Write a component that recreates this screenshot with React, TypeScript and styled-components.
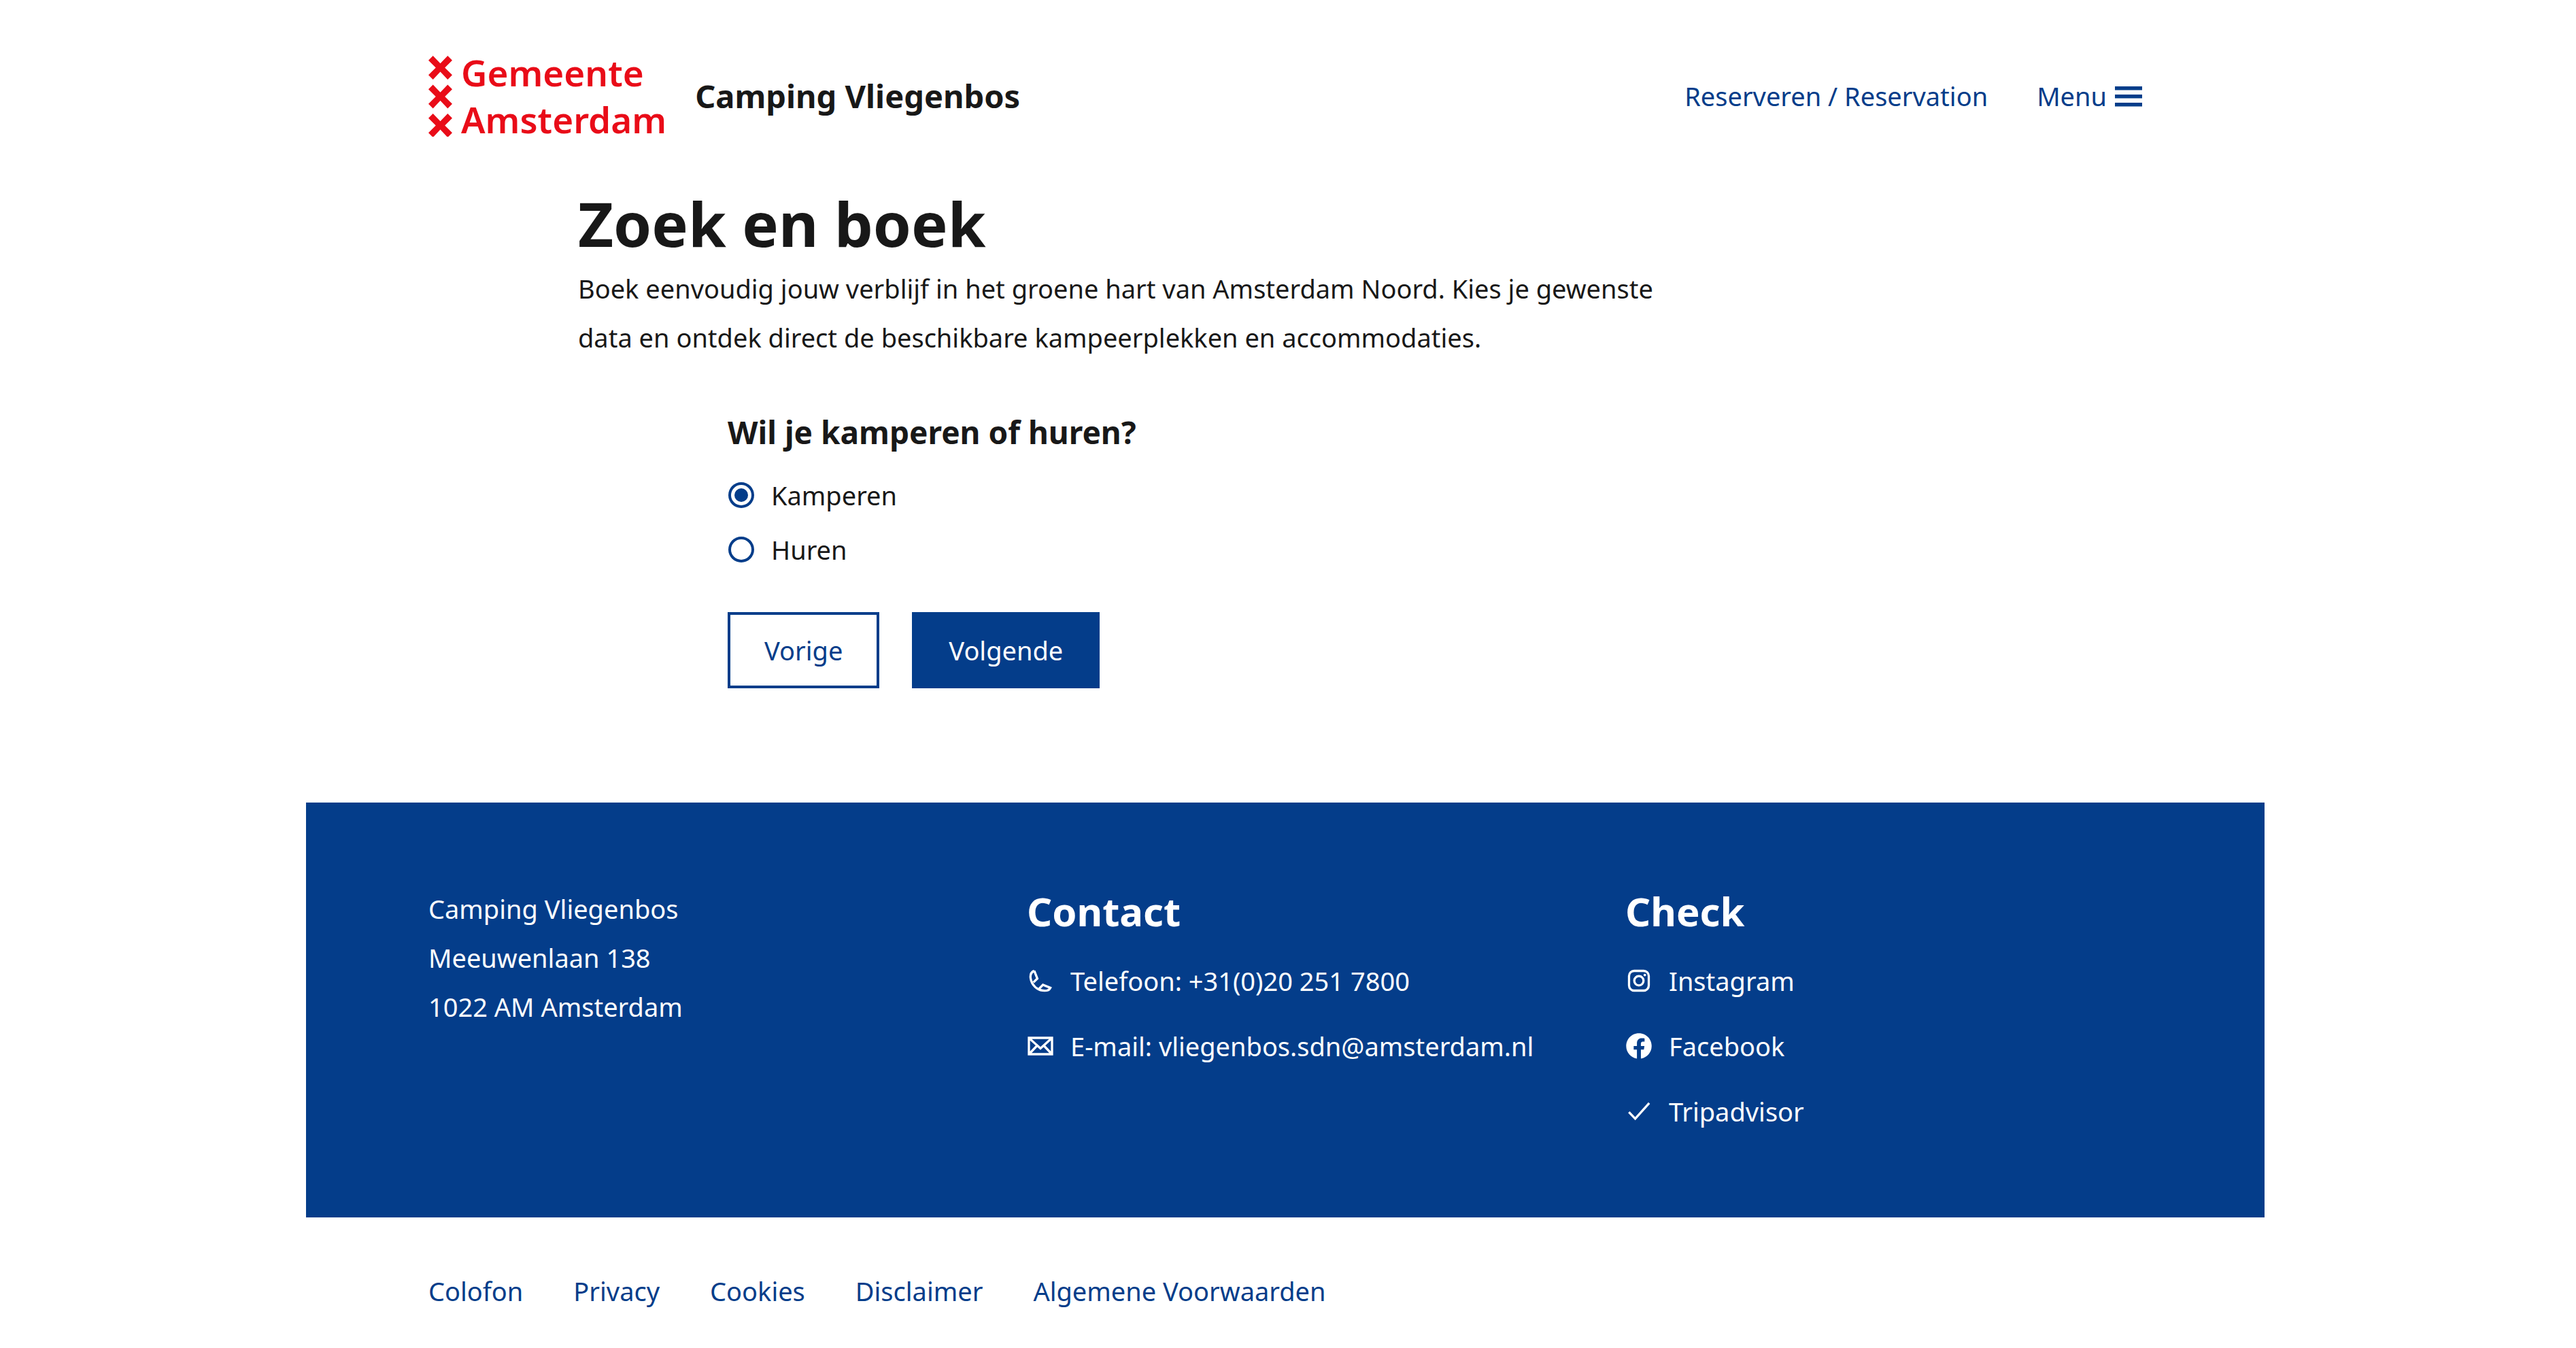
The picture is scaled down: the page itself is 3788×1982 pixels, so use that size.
import React, { useState } from 'react';
import styled, { createGlobalStyle, css } from 'styled-components';

const color = {
  blue: '#043d8a',
  red: '#e90c18',
  text: '#181818',
  white: '#ffffff',
};

const GlobalStyle = createGlobalStyle`
  *, *::before, *::after { box-sizing: border-box; }
  body {
    margin: 0;
    background: ${color.white};
    color: ${color.text};
    font-family: 'Noto Sans', 'Open Sans', sans-serif;
    font-size: 38px;
    line-height: 72px;
  }
`;

const Page = styled.div`
  padding-right: 8px;
`;

const Container = styled.div`
  max-width: 2880px;
  margin: 0 auto;
`;

const Header = styled.header`
  display: flex;
  align-items: center;
  gap: 42px;
  padding: 72px 180px 62px;
`;

const LogoLink = styled.a`
  display: flex;
  align-items: center;
  gap: 12px;
  color: ${color.red};
  text-decoration: none;
`;

const LogoText = styled.span`
  display: flex;
  flex-direction: column;
  font-size: 53px;
  font-weight: 600;
  line-height: 69px;
`;

const SiteTitle = styled.span`
  font-size: 47px;
  font-weight: 700;
  line-height: 62px;
`;

const HeaderNav = styled.nav`
  display: flex;
  align-items: center;
  gap: 72px;
  margin-left: auto;
`;

const TextLink = styled.a`
  color: ${color.blue};
  text-decoration: none;
  white-space: nowrap;
`;

const MenuButton = styled.button`
  display: flex;
  align-items: center;
  gap: 12px;
  padding: 0;
  border: 0;
  background: none;
  color: ${color.blue};
  font: inherit;
  cursor: pointer;
`;

const Grid = styled.div`
  display: grid;
  grid-template-columns: repeat(12, minmax(0, 1fr));
  column-gap: 120px;
  padding: 0 180px;
`;

const Intro = styled.div`
  grid-column: 2 / span 8;
`;

const PageTitle = styled.h1`
  margin: 0 0 4px;
  font-size: 90px;
  font-weight: 700;
  line-height: 112px;
`;

const Lead = styled.p`
  margin: 0;
`;

const BookingForm = styled.form`
  grid-column: 3 / span 8;
  padding: 72px 0 168px;
`;

const Question = styled.fieldset`
  margin: 0;
  padding: 0;
  border: 0;
`;

const QuestionTitle = styled.legend`
  margin-bottom: 22px;
  padding: 0;
  font-size: 46px;
  font-weight: 700;
  line-height: 62px;
`;

const Option = styled.label`
  display: flex;
  align-items: center;
  gap: 24px;
  line-height: 80px;
  cursor: pointer;
`;

const Radio = styled.input`
  display: grid;
  place-content: center;
  width: 40px;
  height: 40px;
  margin: 0;
  border: 1px solid transparent;
  border-radius: 50%;
  box-shadow: inset 0 0 0 4px ${color.blue};
  appearance: none;

  &:checked::before {
    content: '';
    width: 20px;
    height: 20px;
    border-radius: 50%;
    background: ${color.blue};
  }
`;

const Actions = styled.div`
  display: flex;
  gap: 48px;
  margin-top: 52px;
`;

const Button = styled.button<{ $primary?: boolean }>`
  height: 112px;
  padding: 0 50px;
  border: 4px solid ${color.blue};
  background: ${color.white};
  color: ${color.blue};
  font: inherit;
  cursor: pointer;
  ${({ $primary }) =>
    $primary &&
    css`
      background: ${color.blue};
      color: ${color.white};
    `}
`;

const Footer = styled.footer`
  background: ${color.white};
`;

const FooterPanel = styled(Grid)`
  padding-top: 120px;
  padding-bottom: 120px;
  background: ${color.blue};
  color: ${color.white};
`;

const FooterColumn = styled.section`
  grid-column: span 4;
`;

const Address = styled.address`
  font-style: normal;
`;

const FooterTitle = styled.h2`
  margin: 0 0 26px;
  font-size: 58px;
  font-weight: 700;
  line-height: 80px;
`;

const LinkList = styled.ul`
  display: grid;
  gap: 24px;
  margin: 0;
  padding: 0;
  list-style: none;
`;

const IconLink = styled.a`
  display: flex;
  align-items: center;
  gap: 24px;
  width: fit-content;
  color: ${color.white};
  text-decoration: none;
  white-space: nowrap;
`;

const LegalList = styled.ul`
  display: flex;
  flex-wrap: wrap;
  gap: 24px 74px;
  margin: 0;
  padding: 72px 180px 48px;
  list-style: none;
`;

const Icon = styled.svg`
  flex: none;
  width: 40px;
  height: 40px;
  fill: none;
  stroke: currentColor;
  stroke-width: 3.3;
`;

const Crosses = () => (
  <svg width="36" height="120" viewBox="0 0 36 120" fill="currentColor" aria-hidden="true">
    {[1, 43.5, 86].map((y) => (
      <path
        key={y}
        transform={`translate(0 ${y})`}
        d="M0 6.7 6.7 0 17.5 11.3 28.3 0 35 6.7 24.2 17.4 35 28.2 28.3 35 17.5 23.6 6.7 35 0 28.2 10.8 17.4Z"
      />
    ))}
  </svg>
);

const MenuIcon = () => (
  <Icon viewBox="0 0 40 40" aria-hidden="true">
    <path fill="currentColor" stroke="none" d="M0 6h40v5.5H0zM0 18h40v5.5H0zM0 30h40v5.5H0z" />
  </Icon>
);

const PhoneIcon = () => (
  <Icon viewBox="0 0 40 40" aria-hidden="true">
    <path d="M10.9 5.4C6.4 7.2 4.8 10.7 5.4 15.8 6.8 26.4 15 34.4 26 34.7c4 .1 7-1.2 8.6-4.3L23.6 26l-5.4 5.6M10.9 5.4l4.5 11.4-5.7 5.6" />
  </Icon>
);

const MailIcon = () => (
  <Icon viewBox="0 0 40 40" aria-hidden="true">
    <path d="M3 8h34v24H3zM3.5 8.5 20 23.500 36.500 8.500M3.500 31.500l11-11.500M36.500 31.500l-11-11.500" />
  </Icon>
);

const InstagramIcon = () => (
  <Icon viewBox="0 0 40 40" aria-hidden="true">
    <rect x="5.5" y="5.5" width="29" height="29" rx="7.5" />
    <circle cx="20" cy="20" r="6.8" />
    <circle cx="28.7" cy="11.6" r="1.9" fill="currentColor" stroke="none" />
  </Icon>
);

const FacebookIcon = () => (
  <Icon viewBox="0 0 40 40" aria-hidden="true">
    <path
      fill="currentColor"
      stroke="none"
      transform="translate(1.3 1.1) scale(1.56)"
      d="M24 12.073c0-6.627-5.373-12-12-12s-12 5.373-12 12c0 5.990 4.388 10.954 10.125 11.854v-8.385H7.078v-3.470h3.047V9.430c0-3.007 1.792-4.669 4.533-4.669 1.312 0 2.686.235 2.686.235v2.953H15.830c-1.491 0-1.956.925-1.956 1.874v2.250h3.328l-.532 3.470h-2.796v8.385C19.612 23.027 24 18.062 24 12.073z"
    />
  </Icon>
);

const CheckIcon = () => (
  <Icon viewBox="0 0 40 40" aria-hidden="true">
    <path d="m5.3 21.2 9.3 9.6L35.2 7.800" />
  </Icon>
);

const contactLinks = [
  { label: 'Telefoon: +31(0)20 251 7800', href: 'tel:+31202517800', Glyph: PhoneIcon },
  {
    label: 'E-mail: vliegenbos.sdn@amsterdam.nl',
    href: 'mailto:vliegenbos.sdn@amsterdam.nl',
    Glyph: MailIcon,
  },
];

const socialLinks = [
  { label: 'Instagram', href: '#instagram', Glyph: InstagramIcon },
  { label: 'Facebook', href: '#facebook', Glyph: FacebookIcon },
  { label: 'Tripadvisor', href: '#tripadvisor', Glyph: CheckIcon },
];

const legalLinks = ['Colofon', 'Privacy', 'Cookies', 'Disclaimer', 'Algemene Voorwaarden'];

const IconLinks = ({ links }: { links: typeof contactLinks }) => (
  <LinkList>
    {links.map(({ label, href, Glyph }) => (
      <li key={label}>
        <IconLink href={href}>
          <Glyph />
          {label}
        </IconLink>
      </li>
    ))}
  </LinkList>
);

export default function App() {
  const [stay, setStay] = useState('Kamperen');

  return (
    <Page>
      <GlobalStyle />
      <Container>
        <Header>
          <LogoLink href="#home">
            <Crosses />
            <LogoText>
              <span>Gemeente</span>
              <span>Amsterdam</span>
            </LogoText>
          </LogoLink>
          <SiteTitle>Camping Vliegenbos</SiteTitle>
          <HeaderNav>
            <TextLink href="#reserveren">Reserveren / Reservation</TextLink>
            <MenuButton type="button">
              Menu
              <MenuIcon />
            </MenuButton>
          </HeaderNav>
        </Header>

        <Grid as="main">
          <Intro>
            <PageTitle>Zoek en boek</PageTitle>
            <Lead>
              Boek eenvoudig jouw verblijf in het groene hart van Amsterdam Noord. Kies je gewenste
              data en ontdek direct de beschikbare kampeerplekken en accommodaties.
            </Lead>
          </Intro>
          <BookingForm onSubmit={(event) => event.preventDefault()}>
            <Question>
              <QuestionTitle>Wil je kamperen of huren?</QuestionTitle>
              {['Kamperen', 'Huren'].map((option) => (
                <Option key={option}>
                  <Radio
                    type="radio"
                    name="stay"
                    value={option}
                    checked={stay === option}
                    onChange={() => setStay(option)}
                  />
                  {option}
                </Option>
              ))}
            </Question>
            <Actions>
              <Button type="button">Vorige</Button>
              <Button type="submit" $primary>
                Volgende
              </Button>
            </Actions>
          </BookingForm>
        </Grid>

        <Footer>
          <FooterPanel>
            <FooterColumn>
              <Address>
                Camping Vliegenbos
                <br />
                Meeuwenlaan 138
                <br />
                1022 AM Amsterdam
              </Address>
            </FooterColumn>
            <FooterColumn>
              <FooterTitle>Contact</FooterTitle>
              <IconLinks links={contactLinks} />
            </FooterColumn>
            <FooterColumn>
              <FooterTitle>Check</FooterTitle>
              <IconLinks links={socialLinks} />
            </FooterColumn>
          </FooterPanel>
          <LegalList>
            {legalLinks.map((label) => (
              <li key={label}>
                <TextLink href="#">{label}</TextLink>
              </li>
            ))}
          </LegalList>
        </Footer>
      </Container>
    </Page>
  );
}
